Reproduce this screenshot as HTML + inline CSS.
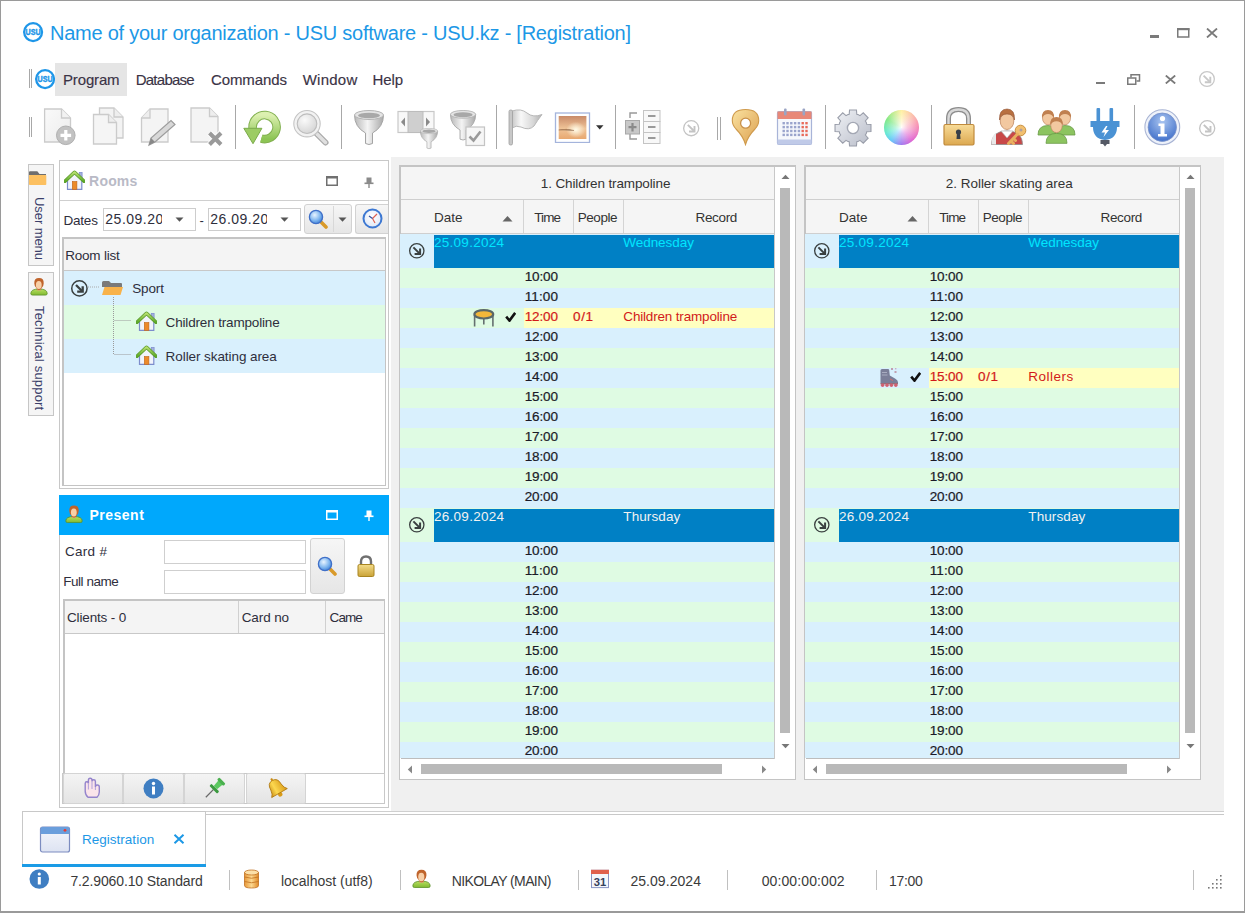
<!DOCTYPE html>
<html><head><meta charset="utf-8"><style>
html,body{margin:0;padding:0;}
body{width:1245px;height:913px;position:relative;overflow:hidden;background:#fff;font-family:"Liberation Sans",sans-serif;}
.a{position:absolute;}
.t{position:absolute;line-height:1;white-space:nowrap;}
</style></head><body>
<div class="a" style="left:0px;top:0px;width:1245px;height:913px;background:#fff;"></div>
<svg class="a" style="left:21.4px;top:19.9px" width="24.2" height="24.2" viewBox="0 0 24.2 24.2"><circle cx="12.1" cy="12.1" r="8.95" fill="#fff" stroke="#1e96e8" stroke-width="2.3"/><text x="12.1" y="15.1" font-family="Liberation Sans" font-weight="700" font-size="9" fill="#1e96e8" stroke="#1e96e8" stroke-width="0.45" text-anchor="middle" textLength="15" lengthAdjust="spacingAndGlyphs">USU</text></svg>
<div class="t" style="top:23.07px;font-size:20px;color:#1c98e6;letter-spacing:-0.244px;left:50px;-webkit-text-stroke:0;">Name of your organization - USU software - USU.kz - [Registration]</div>
<div class="a" style="left:1150px;top:35px;width:9px;height:2.5px;background:#7a7a7a;"></div>
<svg class="a" style="left:1177px;top:28px" width="13" height="10" viewBox="0 0 13 10"><rect x="0.75" y="1" width="11" height="8" fill="none" stroke="#7a7a7a" stroke-width="1.5"/><rect x="0" y="0" width="12.5" height="2.2" fill="#7a7a7a"/></svg>
<svg class="a" style="left:1206px;top:28px" width="12" height="10" viewBox="0 0 12 10"><path d="M1 0.5L11 9.5M11 0.5L1 9.5" stroke="#7a7a7a" stroke-width="1.8"/></svg>
<div class="a" style="left:28.5px;top:69px;width:1px;height:19px;background:#a8a8a8;"></div>
<div class="a" style="left:31px;top:69px;width:1px;height:19px;background:#a8a8a8;"></div>
<svg class="a" style="left:32.9px;top:66.7px" width="24.2" height="24.2" viewBox="0 0 24.2 24.2"><circle cx="12.1" cy="12.1" r="8.95" fill="#fff" stroke="#1e96e8" stroke-width="2.3"/><text x="12.1" y="15.1" font-family="Liberation Sans" font-weight="700" font-size="9" fill="#1e96e8" stroke="#1e96e8" stroke-width="0.45" text-anchor="middle" textLength="15" lengthAdjust="spacingAndGlyphs">USU</text></svg>
<div class="a" style="left:55px;top:63px;width:72px;height:33px;background:#e5e5e5;"></div>
<div class="t" style="top:72.30px;font-size:15px;color:#3a3345;letter-spacing:-0.153px;left:63px;-webkit-text-stroke:0.15px currentColor;">Program</div>
<div class="t" style="top:72.30px;font-size:15px;color:#3a3345;letter-spacing:-0.745px;left:135.7px;-webkit-text-stroke:0.15px currentColor;">Database</div>
<div class="t" style="top:72.30px;font-size:15px;color:#3a3345;letter-spacing:-0.099px;left:211px;-webkit-text-stroke:0.15px currentColor;">Commands</div>
<div class="t" style="top:72.30px;font-size:15px;color:#3a3345;letter-spacing:0.250px;left:302.7px;-webkit-text-stroke:0.15px currentColor;">Window</div>
<div class="t" style="top:72.30px;font-size:15px;color:#3a3345;letter-spacing:-0.117px;left:372.5px;-webkit-text-stroke:0.15px currentColor;">Help</div>
<div class="a" style="left:1096px;top:81.5px;width:9px;height:2.5px;background:#7a7a7a;"></div>
<svg class="a" style="left:1127px;top:74px" width="14" height="11" viewBox="0 0 14 11"><rect x="0.75" y="4" width="8" height="6.25" fill="#fff" stroke="#7a7a7a" stroke-width="1.5"/><path d="M4 3.5V0.75H12.5V7H9.5" fill="none" stroke="#7a7a7a" stroke-width="1.5"/></svg>
<svg class="a" style="left:1165px;top:75px" width="11" height="9" viewBox="0 0 11 9"><path d="M0.8 0.5L10.2 8.5M10.2 0.5L0.8 8.5" stroke="#7a7a7a" stroke-width="1.8"/></svg>
<svg class="a" style="left:1198px;top:70px" width="18" height="18" viewBox="0 0 18 18"><circle cx="9" cy="9" r="7.35" fill="none" stroke="#c8c8c8" stroke-width="1.3"/><path d="M5.6 5.6L11.6 11.6" stroke="#c8c8c8" stroke-width="1.9"/><path d="M12.3 6.8V12.3H6.8" fill="none" stroke="#c8c8c8" stroke-width="1.9"/></svg>
<div class="a" style="left:28.5px;top:117px;width:1px;height:20px;background:#a8a8a8;"></div>
<div class="a" style="left:31px;top:117px;width:1px;height:20px;background:#a8a8a8;"></div>
<svg class="a" style="left:42px;top:106px" width="36" height="40" viewBox="0 0 36 40"><defs><linearGradient id="pg" x1="0" y1="0" x2="1" y2="1"><stop offset="0" stop-color="#fafafa"/><stop offset="1" stop-color="#ececec"/></linearGradient></defs><path d="M2.6 3H19.5L28.5 12V36H2.6Z" fill="url(#pg)" stroke="#cbcbcb" stroke-width="1.3"/><path d="M19.5 3V12H28.5" fill="#f2f2f2" stroke="#cbcbcb" stroke-width="1.3"/><circle cx="23.8" cy="29.3" r="9.3" fill="#c2c2c2" stroke="#b0b0b0" stroke-width="1"/><path d="M23.8 24V34.6M18.5 29.3H29.1" stroke="#fff" stroke-width="3.2"/></svg>
<svg class="a" style="left:91px;top:106px" width="36" height="40" viewBox="0 0 36 40"><path d="M8.5 2H23L32 11V32H8.5Z" fill="#f3f3f3" stroke="#cbcbcb" stroke-width="1.3"/><path d="M23 2V11H32" fill="#eee" stroke="#cbcbcb" stroke-width="1.3"/><path d="M2.5 8.5H17.5L25.5 16.5V38H2.5Z" fill="#f5f5f5" stroke="#cbcbcb" stroke-width="1.3"/><path d="M17.5 8.5V16.5H25.5" fill="#eee" stroke="#cbcbcb" stroke-width="1.3"/></svg>
<svg class="a" style="left:140px;top:106px" width="38" height="42" viewBox="0 0 38 42"><path d="M10 3H28V36H1.5V12Z" fill="#f4f4f4" stroke="#cbcbcb" stroke-width="1.3"/><path d="M10 3V12H1.5" fill="#eee" stroke="#cbcbcb" stroke-width="1.3"/><path d="M9 39L11 32L31 14.5L35 18.5L15 36Z" fill="#d8d8d8" stroke="#9c9c9c" stroke-width="1.2"/><path d="M9 39L11 32L15 36Z" fill="#888"/></svg>
<svg class="a" style="left:189px;top:106px" width="36" height="40" viewBox="0 0 36 40"><path d="M2 2H20.5L29 10.5V36H2Z" fill="#f4f4f4" stroke="#cbcbcb" stroke-width="1.3"/><path d="M20.5 2V10.5H29" fill="#eee" stroke="#cbcbcb" stroke-width="1.3"/><path d="M20.5 27L32 38.5M32 27L20.5 38.5" stroke="#fff" stroke-width="6"/><path d="M20.5 27L32 38.5M32 27L20.5 38.5" stroke="#9a9a9a" stroke-width="4"/></svg>
<div class="a" style="left:234.5px;top:105px;width:1px;height:44px;background:#a8a8a8;"></div>
<svg class="a" style="left:242px;top:109px" width="40" height="37" viewBox="0 0 40 37"><defs><linearGradient id="rg" x1="0" y1="0" x2="0" y2="1"><stop offset="0" stop-color="#dcf0b0"/><stop offset="1" stop-color="#8cc454"/></linearGradient></defs><path d="M10.6 19.5V18.1A12 12 0 1 1 19.3 29.6" fill="none" stroke="#82b050" stroke-width="8.6"/><path d="M10.6 19.5V18.1A12 12 0 1 1 19.3 29.6" fill="none" stroke="url(#rg)" stroke-width="6.6"/><path d="M1.8 19.3H19.9L11 34.7Z" fill="#9ccc64" stroke="#7aaa4a" stroke-width="1"/></svg>
<svg class="a" style="left:291px;top:108px" width="40" height="40" viewBox="0 0 40 40"><defs><radialGradient id="mgg" cx="0.4" cy="0.35" r="0.7"><stop offset="0" stop-color="#fafafa"/><stop offset="1" stop-color="#cfcfcf"/></radialGradient></defs><path d="M26 26L34.5 34.5" stroke="#a8a8a8" stroke-width="6" stroke-linecap="round"/><path d="M26 26L34.5 34.5" stroke="#e0e0e0" stroke-width="3.5" stroke-linecap="round"/><circle cx="16" cy="15.7" r="11.5" fill="url(#mgg)" stroke="#f2f2f2" stroke-width="3"/><circle cx="16" cy="15.7" r="13.2" fill="none" stroke="#c4c4c4" stroke-width="1.1"/><circle cx="16" cy="15.7" r="9.8" fill="none" stroke="#bdbdbd" stroke-width="1.1"/></svg>
<div class="a" style="left:340.5px;top:105px;width:1px;height:44px;background:#a8a8a8;"></div>
<svg width="0" height="0" style="position:absolute"><defs><linearGradient id="fg" x1="0" y1="0" x2="1" y2="0"><stop offset="0" stop-color="#b8b8b8"/><stop offset="0.45" stop-color="#f4f4f4"/><stop offset="1" stop-color="#a8a8a8"/></linearGradient></defs></svg>
<svg class="a" style="left:353.5px;top:110px" width="32" height="37" viewBox="0 0 32 37"><g transform="scale(1.0)"><path d="M0.5 5Q0.5 17 11.5 23V33.5Q15 35.5 18.5 33.5V23Q29.5 17 29.5 5Z" fill="url(#fg)" stroke="#a4a4a4" stroke-width="1"/><ellipse cx="15" cy="5" rx="14.5" ry="4.5" fill="#e4e4e4" stroke="#b4b4b4" stroke-width="1"/><ellipse cx="15" cy="5.5" rx="11" ry="2.8" fill="#a8a8a8"/></g></svg>
<svg class="a" style="left:397px;top:110px" width="42" height="37" viewBox="0 0 42 37"><rect x="1" y="1.5" width="36" height="21" fill="#f8f8f8" stroke="#c8c8c8" stroke-width="1.2"/><rect x="11" y="1.5" width="15" height="21" fill="#cfcfcf" stroke="#bcbcbc" stroke-width="1"/><path d="M8 7.5V16.5L4 12Z" fill="#8a8a8a"/><path d="M29 7.5V16.5L33 12Z" fill="#8a8a8a"/></svg>
<svg class="a" style="left:420px;top:127.5px" width="19" height="22" viewBox="0 0 19 22"><g transform="scale(0.6)"><path d="M0.5 5Q0.5 17 11.5 23V33.5Q15 35.5 18.5 33.5V23Q29.5 17 29.5 5Z" fill="url(#fg)" stroke="#a4a4a4" stroke-width="1"/><ellipse cx="15" cy="5" rx="14.5" ry="4.5" fill="#e4e4e4" stroke="#b4b4b4" stroke-width="1"/><ellipse cx="15" cy="5.5" rx="11" ry="2.8" fill="#a8a8a8"/></g></svg>
<svg class="a" style="left:449.5px;top:110px" width="27" height="32" viewBox="0 0 27 32"><g transform="scale(0.87)"><path d="M0.5 5Q0.5 17 11.5 23V33.5Q15 35.5 18.5 33.5V23Q29.5 17 29.5 5Z" fill="url(#fg)" stroke="#a4a4a4" stroke-width="1"/><ellipse cx="15" cy="5" rx="14.5" ry="4.5" fill="#e4e4e4" stroke="#b4b4b4" stroke-width="1"/><ellipse cx="15" cy="5.5" rx="11" ry="2.8" fill="#a8a8a8"/></g></svg>
<svg class="a" style="left:464.5px;top:125.5px" width="21" height="21" viewBox="0 0 21 21"><rect x="1" y="1" width="18.5" height="18.5" fill="#f6f6f6" stroke="#c4c4c4" stroke-width="1.2"/><path d="M4.5 10.5L8.5 14.5L15.5 5.5" fill="none" stroke="#9a9a9a" stroke-width="2.6"/></svg>
<div class="a" style="left:495.5px;top:105px;width:1px;height:44px;background:#a8a8a8;"></div>
<svg class="a" style="left:507px;top:108px" width="37" height="39" viewBox="0 0 37 39"><defs><linearGradient id="flg" x1="0" y1="0" x2="1" y2="0"><stop offset="0" stop-color="#c8c8c8"/><stop offset="0.3" stop-color="#f8f8f8"/><stop offset="0.7" stop-color="#d8d8d8"/><stop offset="1" stop-color="#b0b0b0"/></linearGradient></defs><path d="M5 3Q14 0 20 5Q26 10 35 6.5Q30 13 27 18Q22 23 14 19Q9 17 5 20Z" fill="url(#flg)" stroke="#b8b8b8" stroke-width="1"/><rect x="2" y="2" width="3.5" height="35" rx="1.5" fill="#c8c8c8" stroke="#a0a0a0" stroke-width="0.8"/></svg>
<svg class="a" style="left:554px;top:112px" width="37" height="31" viewBox="0 0 37 31"><defs><linearGradient id="ig" x1="0" y1="0" x2="0" y2="1"><stop offset="0" stop-color="#c88a68"/><stop offset="0.55" stop-color="#f0c498"/><stop offset="1" stop-color="#e8a870"/></linearGradient><radialGradient id="sun" cx="0.62" cy="0.6" r="0.35"><stop offset="0" stop-color="#fffbe8"/><stop offset="1" stop-color="#fffbe8" stop-opacity="0"/></radialGradient></defs><rect x="1.5" y="1" width="34" height="29.5" fill="#fff" stroke="#a4b4dc" stroke-width="1.3"/><rect x="4.7" y="4" width="27.7" height="23" fill="url(#ig)"/><rect x="4.7" y="4" width="27.7" height="23" fill="url(#sun)"/><path d="M4.7 18Q12 16.5 20 18.5" stroke="#8a5a3a" stroke-width="1" opacity="0.6"/></svg>
<svg class="a" style="left:595.5px;top:124.5px" width="8" height="5" viewBox="0 0 8 5"><path d="M0 0.2H7.5L3.75 4.5Z" fill="#333"/></svg>
<div class="a" style="left:614.5px;top:105px;width:1px;height:44px;background:#a8a8a8;"></div>
<svg class="a" style="left:624px;top:109px" width="38" height="38" viewBox="0 0 38 38"><path d="M13 4H6V9M6 25V30H13" fill="none" stroke="#999" stroke-width="1.4"/><rect x="1.5" y="11.5" width="14" height="13.5" fill="#c8c8c8" stroke="#a8a8a8" stroke-width="1"/><path d="M8.5 14V22.5M4.5 18.2H12.5" stroke="#8a8a8a" stroke-width="2.2"/><rect x="19.5" y="1.5" width="16.5" height="11" fill="#f8f8f8" stroke="#c4c4c4" stroke-width="1"/><rect x="19.5" y="12.5" width="16.5" height="11" fill="#f8f8f8" stroke="#c4c4c4" stroke-width="1"/><rect x="19.5" y="23.5" width="16.5" height="11" fill="#f8f8f8" stroke="#c4c4c4" stroke-width="1"/><path d="M24 7H31.5M24 18H31.5M24 29H31.5" stroke="#9a9a9a" stroke-width="2"/></svg>
<svg class="a" style="left:682.3px;top:118.8px" width="18.4" height="18.4" viewBox="0 0 18.4 18.4"><circle cx="9.2" cy="9.2" r="7.549999999999999" fill="none" stroke="#c4c4c4" stroke-width="1.3"/><path d="M5.799999999999999 5.799999999999999L11.799999999999999 11.799999999999999" stroke="#c4c4c4" stroke-width="1.9"/><path d="M12.5 6.999999999999999V12.5H6.999999999999999" fill="none" stroke="#c4c4c4" stroke-width="1.9"/></svg>
<div class="a" style="left:717px;top:117px;width:1px;height:23px;background:#a8a8a8;"></div>
<div class="a" style="left:719.5px;top:117px;width:1px;height:23px;background:#a8a8a8;"></div>
<svg class="a" style="left:731px;top:108px" width="30" height="38" viewBox="0 0 30 38"><defs><linearGradient id="mpg" x1="0" y1="0" x2="1" y2="1"><stop offset="0" stop-color="#fae2a0"/><stop offset="1" stop-color="#dca050"/></linearGradient></defs><path d="M14.5 36.5Q12 28 5 21Q1.3 17 1.3 12.5Q1.3 1.5 14.5 1.5Q27.7 1.5 27.7 12.5Q27.7 17 24 21Q17 28 14.5 36.5Z" fill="url(#mpg)" stroke="#cf9a4c" stroke-width="1.1"/><circle cx="14.6" cy="15.2" r="5" fill="#fff" stroke="#c89048" stroke-width="1.3"/></svg>
<svg class="a" style="left:776px;top:108px" width="37" height="38" viewBox="0 0 37 38"><rect x="1.5" y="3.5" width="34" height="33" rx="1.5" fill="#f6f8fc" stroke="#a8b4d8" stroke-width="1.2"/><rect x="1.5" y="3.5" width="34" height="7.5" fill="#e88878"/><rect x="1.5" y="31.5" width="34" height="5" fill="#c0cae8"/><rect x="8" y="0.5" width="2.6" height="7" rx="1" fill="#9aa4c4"/><rect x="26.5" y="0.5" width="2.6" height="7" rx="1" fill="#9aa4c4"/><rect x="6.5" y="14.0" width="2.4" height="2.4" fill="#9aa4cc"/><rect x="10.3" y="14.0" width="2.4" height="2.4" fill="#9aa4cc"/><rect x="14.1" y="14.0" width="2.4" height="2.4" fill="#9aa4cc"/><rect x="17.9" y="14.0" width="2.4" height="2.4" fill="#9aa4cc"/><rect x="21.7" y="14.0" width="2.4" height="2.4" fill="#9aa4cc"/><rect x="25.5" y="14.0" width="2.4" height="2.4" fill="#e86a5a"/><rect x="29.3" y="14.0" width="2.4" height="2.4" fill="#e86a5a"/><rect x="6.5" y="17.9" width="2.4" height="2.4" fill="#9aa4cc"/><rect x="10.3" y="17.9" width="2.4" height="2.4" fill="#9aa4cc"/><rect x="14.1" y="17.9" width="2.4" height="2.4" fill="#9aa4cc"/><rect x="17.9" y="17.9" width="2.4" height="2.4" fill="#9aa4cc"/><rect x="21.7" y="17.9" width="2.4" height="2.4" fill="#9aa4cc"/><rect x="25.5" y="17.9" width="2.4" height="2.4" fill="#e86a5a"/><rect x="29.3" y="17.9" width="2.4" height="2.4" fill="#e86a5a"/><rect x="6.5" y="21.8" width="2.4" height="2.4" fill="#9aa4cc"/><rect x="10.3" y="21.8" width="2.4" height="2.4" fill="#9aa4cc"/><rect x="14.1" y="21.8" width="2.4" height="2.4" fill="#9aa4cc"/><rect x="17.9" y="21.8" width="2.4" height="2.4" fill="#9aa4cc"/><rect x="21.7" y="21.8" width="2.4" height="2.4" fill="#9aa4cc"/><rect x="25.5" y="21.8" width="2.4" height="2.4" fill="#e86a5a"/><rect x="29.3" y="21.8" width="2.4" height="2.4" fill="#e86a5a"/><rect x="6.5" y="25.7" width="2.4" height="2.4" fill="#9aa4cc"/><rect x="10.3" y="25.7" width="2.4" height="2.4" fill="#9aa4cc"/><rect x="14.1" y="25.7" width="2.4" height="2.4" fill="#9aa4cc"/><rect x="17.9" y="25.7" width="2.4" height="2.4" fill="#9aa4cc"/><rect x="21.7" y="25.7" width="2.4" height="2.4" fill="#9aa4cc"/><rect x="25.5" y="25.7" width="2.4" height="2.4" fill="#e86a5a"/><rect x="29.3" y="25.7" width="2.4" height="2.4" fill="#e86a5a"/></svg>
<div class="a" style="left:824.5px;top:105px;width:1px;height:44px;background:#a8a8a8;"></div>
<svg class="a" style="left:833.5px;top:108.5px" width="38" height="38" viewBox="0 0 38 38"><defs><linearGradient id="gg" x1="0" y1="0" x2="1" y2="1"><stop offset="0" stop-color="#f0f2f6"/><stop offset="1" stop-color="#b8bcc8"/></linearGradient></defs><polygon points="32.69,15.21 36.97,15.54 36.97,22.46 32.69,22.79 32.30,24.51 31.36,26.00 34.15,29.26 29.26,34.15 26.00,31.36 24.51,32.30 22.79,32.69 22.46,36.97 15.54,36.97 15.21,32.69 13.49,32.30 12.00,31.36 8.74,34.15 3.85,29.26 6.64,26.00 5.70,24.51 5.31,22.79 1.03,22.46 1.03,15.54 5.31,15.21 5.70,13.49 6.64,12.00 3.85,8.74 8.74,3.85 12.00,6.64 13.49,5.70 15.21,5.31 15.54,1.03 22.46,1.03 22.79,5.31 24.51,5.70 26.00,6.64 29.26,3.85 34.15,8.74 31.36,12.00 32.30,13.49" fill="url(#gg)" stroke="#9a9eaa" stroke-width="1.1"/><circle cx="19" cy="19" r="5.6" fill="#fff" stroke="#a4a8b4" stroke-width="1.4"/></svg>
<div class="a" style="left:883.6px;top:109.6px;width:35.2px;height:35.2px;background:radial-gradient(circle closest-side, rgba(255,255,255,0.95) 0%, rgba(255,255,255,0.55) 35%, rgba(255,255,255,0) 100%), conic-gradient(from 0deg, #fff0a0, #f890b0 80deg, #e060d0 140deg, #a078f0 180deg, #60c8f8 220deg, #60e8d0 250deg, #80e880 300deg, #fff0a0 360deg);border-radius:50%;"></div>
<div class="a" style="left:930.5px;top:105px;width:1px;height:44px;background:#a8a8a8;"></div>
<svg class="a" style="left:942px;top:107px" width="34" height="40" viewBox="0 0 34 40"><defs><linearGradient id="lkg" x1="0" y1="0" x2="0" y2="1"><stop offset="0" stop-color="#f8dc98"/><stop offset="1" stop-color="#dca850"/></linearGradient></defs><path d="M6.5 18V11.5Q6.5 2.5 16.5 2.5Q26.5 2.5 26.5 11.5V18" fill="none" stroke="#8c8c8c" stroke-width="5"/><path d="M6.5 18V11.5Q6.5 2.5 16.5 2.5Q26.5 2.5 26.5 11.5V18" fill="none" stroke="#d8d8d8" stroke-width="2.4"/><rect x="2" y="17.5" width="30" height="20.5" rx="1.5" fill="url(#lkg)" stroke="#c08a3c" stroke-width="1.2"/><circle cx="16.5" cy="25" r="2.6" fill="#3a4048"/><path d="M15 25.5H18L18.5 32H14.5Z" fill="#3a4048"/></svg>
<svg class="a" style="left:990px;top:107px" width="38" height="39" viewBox="0 0 38 39"><path d="M1.5 37.5Q1.5 24 17 24Q32.5 24 32.5 37.5Z" fill="#c84848" stroke="#8a8a8a" stroke-width="0.8"/><path d="M11 24L17 31L23 24Z" fill="#fff" stroke="#aaa" stroke-width="0.6"/><path d="M1.5 37.5Q1.5 28 6 26V37.5Z" fill="#e8e8e8"/><ellipse cx="17" cy="14" rx="6.8" ry="8.5" fill="#f2c8a0" stroke="#c08860" stroke-width="0.8"/><path d="M9.5 13Q9 2 17 2Q25 2 24.5 13Q23.5 7 17 7Q10.5 7 9.5 13Z" fill="#b87040" stroke="#905030" stroke-width="0.6"/><circle cx="30.5" cy="23.5" r="5.3" fill="#f2c070" stroke="#c89040" stroke-width="1"/><circle cx="31" cy="23" r="1.5" fill="#b0a0a0"/><path d="M27.5 27L18.5 36.5M21 34L23.5 36.5M23.5 31.5L25.5 33.5" stroke="#e8b060" stroke-width="3" stroke-linecap="round"/></svg>
<svg class="a" style="left:1036px;top:108px" width="42" height="38" viewBox="0 0 42 38"><path d="M2.0 27.0Q2.0 17.5 12 17.5Q22.0 17.5 22.0 27.0Z" fill="#8cc460" stroke="#6a9a48" stroke-width="0.8"/><ellipse cx="12" cy="10" rx="5.5" ry="6.8" fill="#f2c8a0" stroke="#c08860" stroke-width="0.7"/><path d="M6.0 10Q5.5 2.0 12 2.0Q18.5 2.0 18.0 10Q16.0 6.0 12 6.0Q8.0 6.0 6.0 10Z" fill="#c08050"/><path d="M19.0 27.0Q19.0 17.5 29 17.5Q39.0 17.5 39.0 27.0Z" fill="#8cc460" stroke="#6a9a48" stroke-width="0.8"/><ellipse cx="29" cy="10" rx="5.5" ry="6.8" fill="#f2c8a0" stroke="#c08860" stroke-width="0.7"/><path d="M23.0 10Q22.5 2.0 29 2.0Q35.5 2.0 35.0 10Q33.0 6.0 29 6.0Q25.0 6.0 23.0 10Z" fill="#c08050"/><path d="M10.0 35.35Q10.0 25.375 20.5 25.375Q31.0 25.375 31.0 35.35Z" fill="#8cc460" stroke="#6a9a48" stroke-width="0.8"/><ellipse cx="20.5" cy="17.5" rx="5.775" ry="7.14" fill="#f2c8a0" stroke="#c08860" stroke-width="0.7"/><path d="M14.2 17.5Q13.675 9.1 20.5 9.1Q27.325 9.1 26.8 17.5Q24.7 13.3 20.5 13.3Q16.3 13.3 14.2 17.5Z" fill="#c08050"/></svg>
<svg class="a" style="left:1089px;top:107px" width="32" height="41" viewBox="0 0 32 41"><rect x="7.5" y="1" width="3.6" height="14" rx="1" fill="#4a92d4"/><rect x="20.5" y="1" width="3.6" height="14" rx="1" fill="#4a92d4"/><path d="M1.5 14H30.5V20H28Q28 32 16 33Q4 32 4 20H1.5Z" fill="#4a92d4"/><path d="M17 19L12.5 25.5H16L14.5 30L20 23H16.5L18.5 19Z" fill="#fff"/><path d="M11.5 33H20.5V37H18L16 39.5L14 37H11.5Z" fill="#555a66"/></svg>
<div class="a" style="left:1134px;top:105px;width:1px;height:44px;background:#a8a8a8;"></div>
<svg class="a" style="left:1143px;top:108px" width="39" height="39" viewBox="0 0 39 39"><defs><radialGradient id="ifg" cx="0.5" cy="0.3" r="0.75"><stop offset="0" stop-color="#a8c4f0"/><stop offset="1" stop-color="#3c6cc8"/></radialGradient></defs><circle cx="19.3" cy="19.2" r="17.4" fill="#eef2fa" stroke="#a8b4d4" stroke-width="1.1"/><circle cx="19.3" cy="19.2" r="14.2" fill="url(#ifg)" stroke="#7890c8" stroke-width="0.8"/><circle cx="19.5" cy="10.5" r="2.6" fill="#fff"/><path d="M15.5 15.5H21.5V26H24V28.5H15V26H17.5V18H15.5Z" fill="#fff"/></svg>
<svg class="a" style="left:1197.8px;top:118.8px" width="18.4" height="18.4" viewBox="0 0 18.4 18.4"><circle cx="9.2" cy="9.2" r="7.549999999999999" fill="none" stroke="#c4c4c4" stroke-width="1.3"/><path d="M5.799999999999999 5.799999999999999L11.799999999999999 11.799999999999999" stroke="#c4c4c4" stroke-width="1.9"/><path d="M12.5 6.999999999999999V12.5H6.999999999999999" fill="none" stroke="#c4c4c4" stroke-width="1.9"/></svg>
<div class="a" style="left:391px;top:157px;width:833px;height:654px;background:#f0f0f0;"></div>
<div class="a" style="left:28px;top:164px;width:26px;height:102px;background:#f5f5f5;border:1px solid #c6c6c6;box-sizing:border-box;"></div>
<svg class="a" style="left:28.8px;top:171px" width="18" height="14" viewBox="0 0 18 14"><path d="M0 4V1.2Q0 0.3 1 0.3H8.3L10.5 3H17V4.2H0Z" fill="#6e6e6e"/><rect x="0" y="4" width="17.3" height="10" rx="0.8" fill="#fcc060"/></svg>
<div class="t" style="top:186.00px;font-size:13px;color:#3b3f6a;letter-spacing:-0.072px;left:33px;transform-origin:0 0;transform:rotate(90deg);left:46px;top:197px;">User menu</div>
<div class="a" style="left:28px;top:272px;width:26px;height:144px;background:#f5f5f5;border:1px solid #c6c6c6;box-sizing:border-box;"></div>
<svg class="a" style="left:30px;top:277px" width="18" height="19" viewBox="0 0 18 18"><defs><linearGradient id="pbg" x1="0" y1="0" x2="0" y2="1"><stop offset="0" stop-color="#b8e060"/><stop offset="1" stop-color="#80b830"/></linearGradient></defs><path d="M0.8 16Q0.8 11.5 9 11.5Q17.2 11.5 17.2 16Q17.2 17.6 15.5 17.6H2.5Q0.8 17.6 0.8 16Z" fill="url(#pbg)" stroke="#5a9028" stroke-width="0.8"/><path d="M7 10.5H11V13H7Z" fill="#d89a70"/><path d="M4.3 6Q4 0.6 9 0.6Q14 0.6 13.7 6Q13.5 9 12 10Q11 12.5 9 12.5Q7 12.5 6 10Q4.5 9 4.3 6Z" fill="#c0642c"/><ellipse cx="8.8" cy="7.6" rx="2.9" ry="4" fill="#f8d0a8"/></svg>
<div class="t" style="top:295.00px;font-size:13px;color:#3b3f6a;letter-spacing:0.189px;left:33px;transform-origin:0 0;transform:rotate(90deg);left:46px;top:306px;">Technical support</div>
<div class="a" style="left:59px;top:160px;width:330px;height:329px;background:#fff;border:1px solid #c8c8c8;box-sizing:border-box;"></div>
<div class="a" style="left:60px;top:200px;width:328px;height:1px;background:#cfcfcf;"></div>
<svg class="a" style="left:63.5px;top:169.5px" width="21" height="20" viewBox="0 0 21 20"><defs><linearGradient id="hrg" x1="0" y1="0" x2="0" y2="1"><stop offset="0" stop-color="#b8e070"/><stop offset="1" stop-color="#5aa828"/></linearGradient></defs><rect x="15.3" y="2.5" width="2.8" height="6" fill="#a4b0dc" stroke="#8090d0" stroke-width="0.8"/><path d="M3.5 9.5L10.5 3L17.8 9.5V19.3H3.5Z" fill="#f2f4fb" stroke="#7c8ccc" stroke-width="1.2"/><rect x="8.3" y="11.5" width="4.6" height="8" fill="#ec8a2a" stroke="#c0641a" stroke-width="0.6"/><path d="M1 11.2L10.5 2.3L20 11.2" fill="none" stroke="#5a9a2a" stroke-width="3.6" stroke-linejoin="round" stroke-linecap="round"/><path d="M1 11.2L10.5 2.3L20 11.2" fill="none" stroke="url(#hrg)" stroke-width="2.2" stroke-linejoin="round" stroke-linecap="round"/></svg>
<div class="t" style="top:174.45px;font-size:14px;color:#b9bac6;letter-spacing:0.188px;font-weight:700;left:89.1px;">Rooms</div>
<svg class="a" style="left:326px;top:176px" width="12" height="10" viewBox="0 0 12 10"><rect x="0.75" y="0.75" width="10.5" height="8.5" fill="none" stroke="#707070" stroke-width="1.5"/><rect x="0" y="0" width="12" height="2.5" fill="#707070"/></svg>
<svg class="a" style="left:364px;top:177px" width="10" height="11" viewBox="0 0 10 11"><rect x="2.5" y="0.5" width="5" height="6" fill="#8a8a8a"/><rect x="0.5" y="5.5" width="9" height="1.6" fill="#8a8a8a"/><rect x="4.3" y="6" width="1.4" height="5" fill="#8a8a8a"/></svg>
<div class="t" style="top:213.57px;font-size:13.5px;color:#2e2e3c;letter-spacing:-0.192px;left:63.4px;">Dates</div>
<div class="a" style="left:103px;top:208px;width:93px;height:23px;background:#fff;border:1px solid #cdcdcd;box-sizing:border-box;"></div>
<div class="a" style="left:105px;top:210px;width:56.5px;height:19px;overflow:hidden">
<div class="t" style="top:2.15px;font-size:14px;color:#2e2e3c;letter-spacing:0.503px;left:0.3px;">25.09.2024</div>
</div>
<svg class="a" style="left:175px;top:217px" width="9" height="5" viewBox="0 0 9 5"><path d="M0.5 0.5H8.5L4.5 4.8Z" fill="#555"/></svg>
<div class="a" style="left:208px;top:208px;width:93px;height:23px;background:#fff;border:1px solid #cdcdcd;box-sizing:border-box;"></div>
<div class="a" style="left:210px;top:210px;width:56.5px;height:19px;overflow:hidden">
<div class="t" style="top:2.15px;font-size:14px;color:#2e2e3c;letter-spacing:0.503px;left:0.3px;">26.09.2024</div>
</div>
<svg class="a" style="left:280px;top:217px" width="9" height="5" viewBox="0 0 9 5"><path d="M0.5 0.5H8.5L4.5 4.8Z" fill="#555"/></svg>
<div class="t" style="top:214.00px;font-size:13px;color:#2e2e3c;left:199.5px;">-</div>
<div class="a" style="left:304px;top:204px;width:48px;height:30px;background:linear-gradient(#f6f6f6,#e6e6e6);border:1px solid #d2d2d2;box-sizing:border-box;border-radius:3px;"></div>
<div class="a" style="left:333px;top:206px;width:1px;height:26px;background:#d8d8d8;"></div>
<svg class="a" style="left:307.5px;top:209px" width="20" height="20" viewBox="0 0 20 20"><defs><radialGradient id="mg" cx="0.4" cy="0.35" r="0.7"><stop offset="0" stop-color="#e8f4ff"/><stop offset="0.6" stop-color="#7fb6ef"/><stop offset="1" stop-color="#3d7fd6"/></radialGradient></defs><path d="M12 12L18 18" stroke="#d99a2a" stroke-width="3.6" stroke-linecap="round"/><circle cx="8" cy="8" r="6.6" fill="url(#mg)" stroke="#3f6fc8" stroke-width="1.3"/></svg>
<svg class="a" style="left:337.5px;top:217px" width="9" height="5" viewBox="0 0 9 5"><path d="M0.5 0.5H8.5L4.5 4.8Z" fill="#555"/></svg>
<div class="a" style="left:355px;top:204px;width:33px;height:30px;background:linear-gradient(#f6f6f6,#e6e6e6);border:1px solid #d2d2d2;box-sizing:border-box;border-right:none;border-radius:3px 0 0 3px;"></div>
<svg class="a" style="left:362px;top:208px" width="21" height="21" viewBox="0 0 21 21"><defs><radialGradient id="cg" cx="0.5" cy="0.4" r="0.6"><stop offset="0" stop-color="#fff"/><stop offset="1" stop-color="#dfe8f6"/></radialGradient></defs><circle cx="10.5" cy="10.5" r="9" fill="url(#cg)" stroke="#3d78d2" stroke-width="2"/><path d="M10.5 10.5L15 6M10.5 10.5L13 15" stroke="#e06050" stroke-width="1.2"/><path d="M10.5 10.5L7 8" stroke="#3050a0" stroke-width="1.2"/></svg>
<div class="a" style="left:388px;top:160px;width:1px;height:329px;background:#c8c8c8;"></div>
<div class="a" style="left:62px;top:237px;width:324px;height:249px;background:#fff;border:1px solid #c4c4c4;box-sizing:border-box;border-width:2px 1px 1px 2px;"></div>
<div class="a" style="left:64px;top:239px;width:321px;height:31px;background:#f4f4f4;"></div>
<div class="a" style="left:64px;top:270px;width:321px;height:1px;background:#c8c8c8;"></div>
<div class="t" style="top:248.57px;font-size:13.5px;color:#2e2e3c;letter-spacing:-0.233px;left:65.3px;">Room list</div>
<div class="a" style="left:64px;top:271px;width:321px;height:34px;background:#d9f0fd;"></div>
<div class="a" style="left:64px;top:305px;width:321px;height:34px;background:#dffbe3;"></div>
<div class="a" style="left:64px;top:339px;width:321px;height:33.5px;background:#d9f0fd;"></div>
<svg class="a" style="left:69.89999999999999px;top:278.8px" width="18.8" height="18.8" viewBox="0 0 18.8 18.8"><circle cx="9.4" cy="9.4" r="7.65" fill="none" stroke="#3a4040" stroke-width="1.5"/><path d="M6.0 6.0L12.0 12.0" stroke="#3a4040" stroke-width="2.3"/><path d="M12.7 7.2V12.7H7.2" fill="none" stroke="#3a4040" stroke-width="2.3"/></svg>
<svg class="a" style="left:88px;top:286px" width="12" height="2" viewBox="0 0 12 2"><path d="M0 1H12" stroke="#aaa" stroke-width="1" stroke-dasharray="1 1"/></svg>
<svg class="a" style="left:102px;top:281px" width="21" height="14" viewBox="0 0 21 14"><path d="M0 1.5Q0 0 1.5 0H7L9 2H19Q20 2 20 3V6H0Z" fill="#7a7a7a"/><path d="M0 14L2.5 6H21L18.5 14Z" fill="#f8b24a"/></svg>
<div class="t" style="top:282.17px;font-size:13.5px;color:#2e2e3c;letter-spacing:-0.117px;left:132.2px;">Sport</div>
<svg class="a" style="left:112px;top:297px" width="20" height="60" viewBox="0 0 20 60"><path d="M1.5 0V57.5M2.5 57.5H19M2.5 23.5H19" fill="none" stroke="#9a9a9a" stroke-width="1" stroke-dasharray="1 1"/></svg>
<svg class="a" style="left:136px;top:310.5px" width="21" height="20" viewBox="0 0 21 20"><defs><linearGradient id="hrg" x1="0" y1="0" x2="0" y2="1"><stop offset="0" stop-color="#b8e070"/><stop offset="1" stop-color="#5aa828"/></linearGradient></defs><rect x="15.3" y="2.5" width="2.8" height="6" fill="#a4b0dc" stroke="#8090d0" stroke-width="0.8"/><path d="M3.5 9.5L10.5 3L17.8 9.5V19.3H3.5Z" fill="#f2f4fb" stroke="#7c8ccc" stroke-width="1.2"/><rect x="8.3" y="11.5" width="4.6" height="8" fill="#ec8a2a" stroke="#c0641a" stroke-width="0.6"/><path d="M1 11.2L10.5 2.3L20 11.2" fill="none" stroke="#5a9a2a" stroke-width="3.6" stroke-linejoin="round" stroke-linecap="round"/><path d="M1 11.2L10.5 2.3L20 11.2" fill="none" stroke="url(#hrg)" stroke-width="2.2" stroke-linejoin="round" stroke-linecap="round"/></svg>
<div class="t" style="top:315.87px;font-size:13.5px;color:#2e2e3c;letter-spacing:-0.164px;left:165.6px;">Children trampoline</div>
<svg class="a" style="left:136px;top:344.5px" width="21" height="20" viewBox="0 0 21 20"><defs><linearGradient id="hrg" x1="0" y1="0" x2="0" y2="1"><stop offset="0" stop-color="#b8e070"/><stop offset="1" stop-color="#5aa828"/></linearGradient></defs><rect x="15.3" y="2.5" width="2.8" height="6" fill="#a4b0dc" stroke="#8090d0" stroke-width="0.8"/><path d="M3.5 9.5L10.5 3L17.8 9.5V19.3H3.5Z" fill="#f2f4fb" stroke="#7c8ccc" stroke-width="1.2"/><rect x="8.3" y="11.5" width="4.6" height="8" fill="#ec8a2a" stroke="#c0641a" stroke-width="0.6"/><path d="M1 11.2L10.5 2.3L20 11.2" fill="none" stroke="#5a9a2a" stroke-width="3.6" stroke-linejoin="round" stroke-linecap="round"/><path d="M1 11.2L10.5 2.3L20 11.2" fill="none" stroke="url(#hrg)" stroke-width="2.2" stroke-linejoin="round" stroke-linecap="round"/></svg>
<div class="t" style="top:349.57px;font-size:13.5px;color:#2e2e3c;letter-spacing:-0.075px;left:165.6px;">Roller skating area</div>
<div class="a" style="left:59px;top:495px;width:330px;height:313px;background:#fff;border:1px solid #c8c8c8;box-sizing:border-box;"></div>
<div class="a" style="left:59px;top:495px;width:330px;height:40px;background:#00a8fc;"></div>
<svg class="a" style="left:64.5px;top:505px" width="18" height="18" viewBox="0 0 18 18"><defs><linearGradient id="pbg" x1="0" y1="0" x2="0" y2="1"><stop offset="0" stop-color="#b8e060"/><stop offset="1" stop-color="#80b830"/></linearGradient></defs><path d="M0.8 16Q0.8 11.5 9 11.5Q17.2 11.5 17.2 16Q17.2 17.6 15.5 17.6H2.5Q0.8 17.6 0.8 16Z" fill="url(#pbg)" stroke="#5a9028" stroke-width="0.8"/><path d="M7 10.5H11V13H7Z" fill="#d89a70"/><path d="M4.3 6Q4 0.6 9 0.6Q14 0.6 13.7 6Q13.5 9 12 10Q11 12.5 9 12.5Q7 12.5 6 10Q4.5 9 4.3 6Z" fill="#c0642c"/><ellipse cx="8.8" cy="7.6" rx="2.9" ry="4" fill="#f8d0a8"/></svg>
<div class="t" style="top:508.15px;font-size:14px;color:#fff;letter-spacing:0.507px;font-weight:700;left:89.4px;">Present</div>
<svg class="a" style="left:326px;top:510px" width="12" height="10" viewBox="0 0 12 10"><rect x="0.75" y="0.75" width="10.5" height="8.5" fill="none" stroke="#fff" stroke-width="1.5"/><rect x="0" y="0" width="12" height="2.5" fill="#fff"/></svg>
<svg class="a" style="left:364px;top:509.5px" width="10" height="11" viewBox="0 0 10 11"><rect x="2.5" y="0.5" width="5" height="6" fill="#fff"/><rect x="0.5" y="5.5" width="9" height="1.6" fill="#fff"/><rect x="4.3" y="6" width="1.4" height="5" fill="#fff"/></svg>
<div class="t" style="top:544.77px;font-size:13.5px;color:#2e2e3c;letter-spacing:0.296px;left:64.9px;">Card #</div>
<div class="t" style="top:574.57px;font-size:13.5px;color:#2e2e3c;letter-spacing:-0.484px;left:63.3px;">Full name</div>
<div class="a" style="left:164px;top:540px;width:142px;height:24px;background:#fff;border:1px solid #cfcfcf;box-sizing:border-box;"></div>
<div class="a" style="left:164px;top:570px;width:142px;height:24px;background:#fff;border:1px solid #cfcfcf;box-sizing:border-box;"></div>
<div class="a" style="left:310px;top:538px;width:35px;height:56px;background:linear-gradient(#f6f6f6,#e6e6e6);border:1px solid #d2d2d2;box-sizing:border-box;border-radius:3px;"></div>
<svg class="a" style="left:317px;top:556px" width="20" height="20" viewBox="0 0 20 20"><defs><radialGradient id="mg" cx="0.4" cy="0.35" r="0.7"><stop offset="0" stop-color="#e8f4ff"/><stop offset="0.6" stop-color="#7fb6ef"/><stop offset="1" stop-color="#3d7fd6"/></radialGradient></defs><path d="M12 12L18 18" stroke="#d99a2a" stroke-width="3.6" stroke-linecap="round"/><circle cx="8" cy="8" r="6.6" fill="url(#mg)" stroke="#3f6fc8" stroke-width="1.3"/></svg>
<svg class="a" style="left:356px;top:555px" width="20" height="23" viewBox="0 0 20 23"><defs><linearGradient id="lg" x1="0" y1="0" x2="0" y2="1"><stop offset="0" stop-color="#f4dc8a"/><stop offset="1" stop-color="#c9a236"/></linearGradient></defs><path d="M5 10V6.5Q5 1.5 10 1.5Q15 1.5 15 6.5V10" fill="none" stroke="#707070" stroke-width="2.4"/><rect x="2" y="9.5" width="16" height="12" rx="1.5" fill="url(#lg)" stroke="#a88420" stroke-width="1"/></svg>
<div class="a" style="left:63px;top:599px;width:322px;height:175px;background:#fff;border:1px solid #c4c4c4;box-sizing:border-box;border-width:2px 1px 1px 2px;"></div>
<div class="a" style="left:65px;top:601px;width:319px;height:32px;background:#f4f4f4;"></div>
<div class="a" style="left:65px;top:633px;width:319px;height:1px;background:#c8c8c8;"></div>
<div class="a" style="left:238px;top:601px;width:1px;height:32px;background:#d0d0d0;"></div>
<div class="a" style="left:325px;top:601px;width:1px;height:32px;background:#d0d0d0;"></div>
<div class="t" style="top:610.87px;font-size:13.5px;color:#2e2e3c;letter-spacing:-0.157px;left:67px;">Clients - 0</div>
<div class="t" style="top:610.87px;font-size:13.5px;color:#2e2e3c;letter-spacing:-0.105px;left:241.7px;">Card no</div>
<div class="t" style="top:610.87px;font-size:13.5px;color:#2e2e3c;letter-spacing:-0.937px;left:329.6px;">Came</div>
<div class="a" style="left:62px;top:773px;width:323px;height:31px;background:#fff;border:1px solid #c8c8c8;box-sizing:border-box;"></div>
<div class="a" style="left:62.5px;top:773px;width:60.5px;height:30.5px;background:linear-gradient(#f4f4f4,#e4e4e4);border:1px solid #d4d4d4;box-sizing:border-box;border-radius:2px;"></div>
<div class="a" style="left:123px;top:773px;width:61.30000000000001px;height:30.5px;background:linear-gradient(#f4f4f4,#e4e4e4);border:1px solid #d4d4d4;box-sizing:border-box;border-radius:2px;"></div>
<div class="a" style="left:184.3px;top:773px;width:61.19999999999999px;height:30.5px;background:linear-gradient(#f4f4f4,#e4e4e4);border:1px solid #d4d4d4;box-sizing:border-box;border-radius:2px;"></div>
<div class="a" style="left:245.5px;top:773px;width:60.89999999999998px;height:30.5px;background:linear-gradient(#f4f4f4,#e4e4e4);border:1px solid #d4d4d4;box-sizing:border-box;border-radius:2px;"></div>
<svg class="a" style="left:84px;top:777px" width="17" height="21" viewBox="0 0 17 21"><path d="M1.2 14V6.5Q1.2 4.8 2.8 4.8Q4.4 4.8 4.4 6.5V3.2Q4.4 1.3 6.2 1.3Q8 1.3 8 3.2V4.5Q8 2.8 9.7 2.8Q11.4 2.8 11.4 4.5V10Q11.4 8 13.3 8Q15.3 8 15.3 10V15Q15.3 18 13 20.3H4Q1.2 18 1.2 14Z" fill="#fae4ea" stroke="#9484cc" stroke-width="1.4"/><path d="M4.4 6.5V12.5M8 4.5V12M11.4 10V13" stroke="#a898d8" stroke-width="0.9"/></svg>
<svg class="a" style="left:143px;top:778px" width="21" height="21" viewBox="0 0 21 21"><circle cx="10.5" cy="10.5" r="10" fill="#3f7ec2"/><rect x="9" y="8.5" width="3" height="8" fill="#fff"/><circle cx="10.5" cy="5.5" r="1.7" fill="#fff"/></svg>
<svg class="a" style="left:203px;top:777px" width="24" height="22" viewBox="0 0 24 22"><g transform="rotate(45 12 11)"><path d="M12 13V24" stroke="#6a6a6a" stroke-width="1.3"/><rect x="6.5" y="10.5" width="11" height="3" rx="1" fill="#3c9a40"/><path d="M9 3H15L14.3 10.5H9.7Z" fill="#5cc860"/><rect x="7.5" y="0.5" width="9" height="3.2" rx="1.2" fill="#4ab04e"/></g></svg>
<svg class="a" style="left:264px;top:776px" width="24" height="23" viewBox="0 0 24 23"><defs><linearGradient id="blg" x1="0" y1="0" x2="1" y2="0"><stop offset="0" stop-color="#c88a10"/><stop offset="0.4" stop-color="#fcd850"/><stop offset="1" stop-color="#d89a18"/></linearGradient></defs><g transform="rotate(-30 12 11)"><circle cx="12" cy="19.5" r="2.3" fill="#d89a18"/><path d="M3 18Q5.5 16 6 11Q6 3.5 12 3.5Q18 3.5 18 11Q18.5 16 21 18Z" fill="url(#blg)" stroke="#b07810" stroke-width="0.8"/><rect x="11" y="1.3" width="2" height="2.5" fill="#c88a10"/></g></svg>
<div class="a" style="left:399px;top:165px;width:397px;height:615px;background:#fff;border:2px solid #c4c4c4;box-sizing:border-box;border-right-width:1px;border-bottom-width:1px;"></div>
<div class="a" style="left:401px;top:167px;width:373px;height:66px;background:#f5f5f5;"></div>
<div class="a" style="left:401px;top:199px;width:373px;height:1px;background:#cfcfcf;"></div>
<div class="a" style="left:401px;top:233px;width:373px;height:1px;background:#cfcfcf;"></div>
<div class="t" style="top:177.27px;font-size:13.5px;color:#333;letter-spacing:-0.118px;left:540.8px;">1. Children trampoline</div>
<div class="a" style="left:523px;top:200px;width:1px;height:33px;background:#d4d4d4;"></div>
<div class="a" style="left:573px;top:200px;width:1px;height:33px;background:#d4d4d4;"></div>
<div class="a" style="left:623px;top:200px;width:1px;height:33px;background:#d4d4d4;"></div>
<div class="t" style="top:211.07px;font-size:13.5px;color:#333;letter-spacing:0.028px;left:434px;">Date</div>
<svg class="a" style="left:501.5px;top:214.5px" width="11" height="7" viewBox="0 0 11 7"><path d="M0.5 6.5L5.5 1L10.5 6.5Z" fill="#666"/></svg>
<div class="t" style="top:211.07px;font-size:13.5px;color:#333;letter-spacing:-0.933px;left:534.3px;">Time</div>
<div class="t" style="top:211.07px;font-size:13.5px;color:#333;letter-spacing:-0.427px;left:577.7px;">People</div>
<div class="t" style="top:211.07px;font-size:13.5px;color:#333;letter-spacing:-0.344px;left:695.5px;">Record</div>
<div class="a" style="left:400px;top:234px;width:375px;height:34px;background:#d9f0fd;"></div>
<div class="a" style="left:434px;top:235px;width:340px;height:33px;background:#0080c5;"></div>
<svg class="a" style="left:407.9px;top:242.2px" width="17.6" height="17.6" viewBox="0 0 17.6 17.6"><circle cx="8.8" cy="8.8" r="7.1499999999999995" fill="none" stroke="#3a4040" stroke-width="1.3"/><path d="M5.4 5.4L11.4 11.4" stroke="#3a4040" stroke-width="2.0"/><path d="M12.100000000000001 6.6000000000000005V12.100000000000001H6.6000000000000005" fill="none" stroke="#3a4040" stroke-width="2.0"/></svg>
<div class="t" style="top:236.27px;font-size:13.5px;color:#00e6ff;letter-spacing:0.270px;left:434px;">25.09.2024</div>
<div class="t" style="top:236.27px;font-size:13.5px;color:#00e6ff;letter-spacing:-0.056px;left:623.3px;">Wednesday</div>
<div class="a" style="left:400px;top:268px;width:375px;height:20px;background:#dffbe3;"></div>
<div class="t" style="top:269.97px;font-size:13.5px;color:#1b1b28;letter-spacing:-0.121px;left:524.7px;-webkit-text-stroke:0.22px currentColor;">10:00</div>
<div class="a" style="left:400px;top:288px;width:375px;height:20px;background:#d9f0fd;"></div>
<div class="t" style="top:289.97px;font-size:13.5px;color:#1b1b28;letter-spacing:0.130px;left:524.7px;-webkit-text-stroke:0.22px currentColor;">11:00</div>
<div class="a" style="left:400px;top:308px;width:375px;height:20px;background:#dffbe3;"></div>
<div class="a" style="left:524px;top:308px;width:250px;height:20px;background:#ffffc0;"></div>
<div class="t" style="top:309.97px;font-size:13.5px;color:#d21a1a;letter-spacing:-0.121px;left:524.7px;-webkit-text-stroke:0.22px currentColor;">12:00</div>
<div class="t" style="top:309.97px;font-size:13.5px;color:#d21a1a;letter-spacing:0.617px;left:573px;-webkit-text-stroke:0.22px currentColor;">0/1</div>
<div class="t" style="top:309.97px;font-size:13.5px;color:#d21a1a;letter-spacing:-0.170px;left:623.3px;">Children trampoline</div>
<svg class="a" style="left:473px;top:308.5px" width="22" height="19" viewBox="0 0 22 19"><path d="M1.6 6V17.5M19.9 6V17.5M10.8 9.5V15.5" stroke="#657070" stroke-width="1.6"/><ellipse cx="10.8" cy="5.3" rx="9.4" ry="4.2" fill="#f2b73a" stroke="#5a6868" stroke-width="2.2"/></svg>
<svg class="a" style="left:505.3px;top:312px" width="11" height="10" viewBox="0 0 11 10"><path d="M1.2 4.6L4.5 8.6L10.2 0.8" fill="none" stroke="#111" stroke-width="2.6" stroke-linejoin="miter"/></svg>
<div class="a" style="left:400px;top:328px;width:375px;height:20px;background:#d9f0fd;"></div>
<div class="t" style="top:329.97px;font-size:13.5px;color:#1b1b28;letter-spacing:-0.121px;left:524.7px;-webkit-text-stroke:0.22px currentColor;">12:00</div>
<div class="a" style="left:400px;top:348px;width:375px;height:20px;background:#dffbe3;"></div>
<div class="t" style="top:349.97px;font-size:13.5px;color:#1b1b28;letter-spacing:-0.121px;left:524.7px;-webkit-text-stroke:0.22px currentColor;">13:00</div>
<div class="a" style="left:400px;top:368px;width:375px;height:20px;background:#d9f0fd;"></div>
<div class="t" style="top:369.97px;font-size:13.5px;color:#1b1b28;letter-spacing:-0.121px;left:524.7px;-webkit-text-stroke:0.22px currentColor;">14:00</div>
<div class="a" style="left:400px;top:388px;width:375px;height:20px;background:#dffbe3;"></div>
<div class="t" style="top:389.97px;font-size:13.5px;color:#1b1b28;letter-spacing:-0.121px;left:524.7px;-webkit-text-stroke:0.22px currentColor;">15:00</div>
<div class="a" style="left:400px;top:408px;width:375px;height:20px;background:#d9f0fd;"></div>
<div class="t" style="top:409.97px;font-size:13.5px;color:#1b1b28;letter-spacing:-0.121px;left:524.7px;-webkit-text-stroke:0.22px currentColor;">16:00</div>
<div class="a" style="left:400px;top:428px;width:375px;height:20px;background:#dffbe3;"></div>
<div class="t" style="top:429.97px;font-size:13.5px;color:#1b1b28;letter-spacing:-0.121px;left:524.7px;-webkit-text-stroke:0.22px currentColor;">17:00</div>
<div class="a" style="left:400px;top:448px;width:375px;height:20px;background:#d9f0fd;"></div>
<div class="t" style="top:449.97px;font-size:13.5px;color:#1b1b28;letter-spacing:-0.121px;left:524.7px;-webkit-text-stroke:0.22px currentColor;">18:00</div>
<div class="a" style="left:400px;top:468px;width:375px;height:20px;background:#dffbe3;"></div>
<div class="t" style="top:469.97px;font-size:13.5px;color:#1b1b28;letter-spacing:-0.121px;left:524.7px;-webkit-text-stroke:0.22px currentColor;">19:00</div>
<div class="a" style="left:400px;top:488px;width:375px;height:20px;background:#d9f0fd;"></div>
<div class="t" style="top:489.97px;font-size:13.5px;color:#1b1b28;letter-spacing:-0.121px;left:524.7px;-webkit-text-stroke:0.22px currentColor;">20:00</div>
<div class="a" style="left:400px;top:508px;width:375px;height:34px;background:#dffbe3;"></div>
<div class="a" style="left:434px;top:509px;width:340px;height:33px;background:#0080c5;"></div>
<svg class="a" style="left:407.9px;top:516.2px" width="17.6" height="17.6" viewBox="0 0 17.6 17.6"><circle cx="8.8" cy="8.8" r="7.1499999999999995" fill="none" stroke="#3a4040" stroke-width="1.3"/><path d="M5.4 5.4L11.4 11.4" stroke="#3a4040" stroke-width="2.0"/><path d="M12.100000000000001 6.6000000000000005V12.100000000000001H6.6000000000000005" fill="none" stroke="#3a4040" stroke-width="2.0"/></svg>
<div class="t" style="top:510.27px;font-size:13.5px;color:#f2f2f2;letter-spacing:0.270px;left:434px;">26.09.2024</div>
<div class="t" style="top:510.27px;font-size:13.5px;color:#f2f2f2;letter-spacing:0.104px;left:623.3px;">Thursday</div>
<div class="a" style="left:400px;top:542px;width:375px;height:20px;background:#d9f0fd;"></div>
<div class="t" style="top:543.97px;font-size:13.5px;color:#1b1b28;letter-spacing:-0.121px;left:524.7px;-webkit-text-stroke:0.22px currentColor;">10:00</div>
<div class="a" style="left:400px;top:562px;width:375px;height:20px;background:#dffbe3;"></div>
<div class="t" style="top:563.97px;font-size:13.5px;color:#1b1b28;letter-spacing:0.130px;left:524.7px;-webkit-text-stroke:0.22px currentColor;">11:00</div>
<div class="a" style="left:400px;top:582px;width:375px;height:20px;background:#d9f0fd;"></div>
<div class="t" style="top:583.97px;font-size:13.5px;color:#1b1b28;letter-spacing:-0.121px;left:524.7px;-webkit-text-stroke:0.22px currentColor;">12:00</div>
<div class="a" style="left:400px;top:602px;width:375px;height:20px;background:#dffbe3;"></div>
<div class="t" style="top:603.97px;font-size:13.5px;color:#1b1b28;letter-spacing:-0.121px;left:524.7px;-webkit-text-stroke:0.22px currentColor;">13:00</div>
<div class="a" style="left:400px;top:622px;width:375px;height:20px;background:#d9f0fd;"></div>
<div class="t" style="top:623.97px;font-size:13.5px;color:#1b1b28;letter-spacing:-0.121px;left:524.7px;-webkit-text-stroke:0.22px currentColor;">14:00</div>
<div class="a" style="left:400px;top:642px;width:375px;height:20px;background:#dffbe3;"></div>
<div class="t" style="top:643.97px;font-size:13.5px;color:#1b1b28;letter-spacing:-0.121px;left:524.7px;-webkit-text-stroke:0.22px currentColor;">15:00</div>
<div class="a" style="left:400px;top:662px;width:375px;height:20px;background:#d9f0fd;"></div>
<div class="t" style="top:663.97px;font-size:13.5px;color:#1b1b28;letter-spacing:-0.121px;left:524.7px;-webkit-text-stroke:0.22px currentColor;">16:00</div>
<div class="a" style="left:400px;top:682px;width:375px;height:20px;background:#dffbe3;"></div>
<div class="t" style="top:683.97px;font-size:13.5px;color:#1b1b28;letter-spacing:-0.121px;left:524.7px;-webkit-text-stroke:0.22px currentColor;">17:00</div>
<div class="a" style="left:400px;top:702px;width:375px;height:20px;background:#d9f0fd;"></div>
<div class="t" style="top:703.97px;font-size:13.5px;color:#1b1b28;letter-spacing:-0.121px;left:524.7px;-webkit-text-stroke:0.22px currentColor;">18:00</div>
<div class="a" style="left:400px;top:722px;width:375px;height:20px;background:#dffbe3;"></div>
<div class="t" style="top:723.97px;font-size:13.5px;color:#1b1b28;letter-spacing:-0.121px;left:524.7px;-webkit-text-stroke:0.22px currentColor;">19:00</div>
<div class="a" style="left:400px;top:742px;width:375px;height:20px;background:#d9f0fd;"></div>
<div class="t" style="top:743.97px;font-size:13.5px;color:#1b1b28;letter-spacing:-0.121px;left:524.7px;-webkit-text-stroke:0.22px currentColor;">20:00</div>
<div class="a" style="left:400px;top:758px;width:375px;height:21px;background:#fff;"></div>
<div class="a" style="left:401px;top:758px;width:373px;height:1px;background:#bdbdbd;"></div>
<div class="a" style="left:774px;top:167px;width:1px;height:592px;background:#c8c8c8;"></div>
<div class="a" style="left:775px;top:167px;width:20px;height:612px;background:#fff;"></div>
<div class="a" style="left:780px;top:188px;width:10px;height:545px;background:#b9b9b9;"></div>
<svg class="a" style="left:781px;top:174px" width="9" height="6" viewBox="0 0 9 6"><path d="M0.5 5L4.5 0.8L8.5 5Z" fill="#777"/></svg>
<svg class="a" style="left:781px;top:743px" width="9" height="6" viewBox="0 0 9 6"><path d="M0.5 1L4.5 5.2L8.5 1Z" fill="#777"/></svg>
<div class="a" style="left:421px;top:764px;width:301px;height:10px;background:#b9b9b9;"></div>
<svg class="a" style="left:407px;top:765px" width="6" height="9" viewBox="0 0 6 9"><path d="M5 0.5L0.8 4.5L5 8.5Z" fill="#888"/></svg>
<svg class="a" style="left:761px;top:765px" width="6" height="9" viewBox="0 0 6 9"><path d="M1 0.5L5.2 4.5L1 8.5Z" fill="#888"/></svg>
<div class="a" style="left:399px;top:779px;width:397px;height:1px;background:#c4c4c4;"></div>
<div class="a" style="left:795px;top:165px;width:1px;height:615px;background:#c4c4c4;"></div>
<div class="a" style="left:804px;top:165px;width:397px;height:615px;background:#fff;border:2px solid #c4c4c4;box-sizing:border-box;border-right-width:1px;border-bottom-width:1px;"></div>
<div class="a" style="left:806px;top:167px;width:373px;height:66px;background:#f5f5f5;"></div>
<div class="a" style="left:806px;top:199px;width:373px;height:1px;background:#cfcfcf;"></div>
<div class="a" style="left:806px;top:233px;width:373px;height:1px;background:#cfcfcf;"></div>
<div class="t" style="top:177.27px;font-size:13.5px;color:#333;letter-spacing:-0.027px;left:945.8px;">2. Roller skating area</div>
<div class="a" style="left:928px;top:200px;width:1px;height:33px;background:#d4d4d4;"></div>
<div class="a" style="left:978px;top:200px;width:1px;height:33px;background:#d4d4d4;"></div>
<div class="a" style="left:1028px;top:200px;width:1px;height:33px;background:#d4d4d4;"></div>
<div class="t" style="top:211.07px;font-size:13.5px;color:#333;letter-spacing:0.028px;left:839px;">Date</div>
<svg class="a" style="left:906.5px;top:214.5px" width="11" height="7" viewBox="0 0 11 7"><path d="M0.5 6.5L5.5 1L10.5 6.5Z" fill="#666"/></svg>
<div class="t" style="top:211.07px;font-size:13.5px;color:#333;letter-spacing:-0.933px;left:939.3px;">Time</div>
<div class="t" style="top:211.07px;font-size:13.5px;color:#333;letter-spacing:-0.427px;left:982.7px;">People</div>
<div class="t" style="top:211.07px;font-size:13.5px;color:#333;letter-spacing:-0.344px;left:1100.5px;">Record</div>
<div class="a" style="left:805px;top:234px;width:375px;height:34px;background:#d9f0fd;"></div>
<div class="a" style="left:839px;top:235px;width:340px;height:33px;background:#0080c5;"></div>
<svg class="a" style="left:812.9000000000001px;top:242.2px" width="17.6" height="17.6" viewBox="0 0 17.6 17.6"><circle cx="8.8" cy="8.8" r="7.1499999999999995" fill="none" stroke="#3a4040" stroke-width="1.3"/><path d="M5.4 5.4L11.4 11.4" stroke="#3a4040" stroke-width="2.0"/><path d="M12.100000000000001 6.6000000000000005V12.100000000000001H6.6000000000000005" fill="none" stroke="#3a4040" stroke-width="2.0"/></svg>
<div class="t" style="top:236.27px;font-size:13.5px;color:#00e6ff;letter-spacing:0.270px;left:839px;">25.09.2024</div>
<div class="t" style="top:236.27px;font-size:13.5px;color:#00e6ff;letter-spacing:-0.056px;left:1028.3px;">Wednesday</div>
<div class="a" style="left:805px;top:268px;width:375px;height:20px;background:#dffbe3;"></div>
<div class="t" style="top:269.97px;font-size:13.5px;color:#1b1b28;letter-spacing:-0.121px;left:929.7px;-webkit-text-stroke:0.22px currentColor;">10:00</div>
<div class="a" style="left:805px;top:288px;width:375px;height:20px;background:#d9f0fd;"></div>
<div class="t" style="top:289.97px;font-size:13.5px;color:#1b1b28;letter-spacing:0.130px;left:929.7px;-webkit-text-stroke:0.22px currentColor;">11:00</div>
<div class="a" style="left:805px;top:308px;width:375px;height:20px;background:#dffbe3;"></div>
<div class="t" style="top:309.97px;font-size:13.5px;color:#1b1b28;letter-spacing:-0.121px;left:929.7px;-webkit-text-stroke:0.22px currentColor;">12:00</div>
<div class="a" style="left:805px;top:328px;width:375px;height:20px;background:#d9f0fd;"></div>
<div class="t" style="top:329.97px;font-size:13.5px;color:#1b1b28;letter-spacing:-0.121px;left:929.7px;-webkit-text-stroke:0.22px currentColor;">13:00</div>
<div class="a" style="left:805px;top:348px;width:375px;height:20px;background:#dffbe3;"></div>
<div class="t" style="top:349.97px;font-size:13.5px;color:#1b1b28;letter-spacing:-0.121px;left:929.7px;-webkit-text-stroke:0.22px currentColor;">14:00</div>
<div class="a" style="left:805px;top:368px;width:375px;height:20px;background:#d9f0fd;"></div>
<div class="a" style="left:929px;top:368px;width:250px;height:20px;background:#ffffc0;"></div>
<div class="t" style="top:369.97px;font-size:13.5px;color:#d21a1a;letter-spacing:-0.121px;left:929.7px;-webkit-text-stroke:0.22px currentColor;">15:00</div>
<div class="t" style="top:369.97px;font-size:13.5px;color:#d21a1a;letter-spacing:0.617px;left:978px;-webkit-text-stroke:0.22px currentColor;">0/1</div>
<div class="t" style="top:369.97px;font-size:13.5px;color:#d21a1a;letter-spacing:0.498px;left:1028.3px;">Rollers</div>
<svg class="a" style="left:879px;top:368px" width="20" height="19" viewBox="0 0 20 19"><path d="M1.5 2.5Q1.5 1 3 1H9Q10 1 10.2 2L10.8 7.5L16 10.5Q19 12 19 14.2V15.5H1.5Z" fill="#7a7e98"/><path d="M3 4.5H8M3 7H8.5" stroke="#a8acc0" stroke-width="1"/><path d="M11 11L14 12.5" stroke="#d07070" stroke-width="1"/><rect x="1.5" y="15" width="17.5" height="1.5" fill="#9a6a78"/><circle cx="3.6" cy="17.3" r="1.7" fill="#d06070"/><circle cx="8" cy="17.3" r="1.7" fill="#d06070"/><circle cx="12.4" cy="17.3" r="1.7" fill="#d06070"/><circle cx="16.8" cy="17.3" r="1.7" fill="#d06070"/><rect x="12" y="0" width="2" height="2" fill="#c0a0b0"/><rect x="15.5" y="3" width="2" height="2" fill="#c0a0b0"/><rect x="16" y="0" width="1.4" height="1.4" fill="#c8b0c0"/></svg>
<svg class="a" style="left:910px;top:372px" width="11" height="10" viewBox="0 0 11 10"><path d="M1.2 4.6L4.5 8.6L10.2 0.8" fill="none" stroke="#111" stroke-width="2.6" stroke-linejoin="miter"/></svg>
<div class="a" style="left:805px;top:388px;width:375px;height:20px;background:#dffbe3;"></div>
<div class="t" style="top:389.97px;font-size:13.5px;color:#1b1b28;letter-spacing:-0.121px;left:929.7px;-webkit-text-stroke:0.22px currentColor;">15:00</div>
<div class="a" style="left:805px;top:408px;width:375px;height:20px;background:#d9f0fd;"></div>
<div class="t" style="top:409.97px;font-size:13.5px;color:#1b1b28;letter-spacing:-0.121px;left:929.7px;-webkit-text-stroke:0.22px currentColor;">16:00</div>
<div class="a" style="left:805px;top:428px;width:375px;height:20px;background:#dffbe3;"></div>
<div class="t" style="top:429.97px;font-size:13.5px;color:#1b1b28;letter-spacing:-0.121px;left:929.7px;-webkit-text-stroke:0.22px currentColor;">17:00</div>
<div class="a" style="left:805px;top:448px;width:375px;height:20px;background:#d9f0fd;"></div>
<div class="t" style="top:449.97px;font-size:13.5px;color:#1b1b28;letter-spacing:-0.121px;left:929.7px;-webkit-text-stroke:0.22px currentColor;">18:00</div>
<div class="a" style="left:805px;top:468px;width:375px;height:20px;background:#dffbe3;"></div>
<div class="t" style="top:469.97px;font-size:13.5px;color:#1b1b28;letter-spacing:-0.121px;left:929.7px;-webkit-text-stroke:0.22px currentColor;">19:00</div>
<div class="a" style="left:805px;top:488px;width:375px;height:20px;background:#d9f0fd;"></div>
<div class="t" style="top:489.97px;font-size:13.5px;color:#1b1b28;letter-spacing:-0.121px;left:929.7px;-webkit-text-stroke:0.22px currentColor;">20:00</div>
<div class="a" style="left:805px;top:508px;width:375px;height:34px;background:#dffbe3;"></div>
<div class="a" style="left:839px;top:509px;width:340px;height:33px;background:#0080c5;"></div>
<svg class="a" style="left:812.9000000000001px;top:516.2px" width="17.6" height="17.6" viewBox="0 0 17.6 17.6"><circle cx="8.8" cy="8.8" r="7.1499999999999995" fill="none" stroke="#3a4040" stroke-width="1.3"/><path d="M5.4 5.4L11.4 11.4" stroke="#3a4040" stroke-width="2.0"/><path d="M12.100000000000001 6.6000000000000005V12.100000000000001H6.6000000000000005" fill="none" stroke="#3a4040" stroke-width="2.0"/></svg>
<div class="t" style="top:510.27px;font-size:13.5px;color:#f2f2f2;letter-spacing:0.270px;left:839px;">26.09.2024</div>
<div class="t" style="top:510.27px;font-size:13.5px;color:#f2f2f2;letter-spacing:0.104px;left:1028.3px;">Thursday</div>
<div class="a" style="left:805px;top:542px;width:375px;height:20px;background:#d9f0fd;"></div>
<div class="t" style="top:543.97px;font-size:13.5px;color:#1b1b28;letter-spacing:-0.121px;left:929.7px;-webkit-text-stroke:0.22px currentColor;">10:00</div>
<div class="a" style="left:805px;top:562px;width:375px;height:20px;background:#dffbe3;"></div>
<div class="t" style="top:563.97px;font-size:13.5px;color:#1b1b28;letter-spacing:0.130px;left:929.7px;-webkit-text-stroke:0.22px currentColor;">11:00</div>
<div class="a" style="left:805px;top:582px;width:375px;height:20px;background:#d9f0fd;"></div>
<div class="t" style="top:583.97px;font-size:13.5px;color:#1b1b28;letter-spacing:-0.121px;left:929.7px;-webkit-text-stroke:0.22px currentColor;">12:00</div>
<div class="a" style="left:805px;top:602px;width:375px;height:20px;background:#dffbe3;"></div>
<div class="t" style="top:603.97px;font-size:13.5px;color:#1b1b28;letter-spacing:-0.121px;left:929.7px;-webkit-text-stroke:0.22px currentColor;">13:00</div>
<div class="a" style="left:805px;top:622px;width:375px;height:20px;background:#d9f0fd;"></div>
<div class="t" style="top:623.97px;font-size:13.5px;color:#1b1b28;letter-spacing:-0.121px;left:929.7px;-webkit-text-stroke:0.22px currentColor;">14:00</div>
<div class="a" style="left:805px;top:642px;width:375px;height:20px;background:#dffbe3;"></div>
<div class="t" style="top:643.97px;font-size:13.5px;color:#1b1b28;letter-spacing:-0.121px;left:929.7px;-webkit-text-stroke:0.22px currentColor;">15:00</div>
<div class="a" style="left:805px;top:662px;width:375px;height:20px;background:#d9f0fd;"></div>
<div class="t" style="top:663.97px;font-size:13.5px;color:#1b1b28;letter-spacing:-0.121px;left:929.7px;-webkit-text-stroke:0.22px currentColor;">16:00</div>
<div class="a" style="left:805px;top:682px;width:375px;height:20px;background:#dffbe3;"></div>
<div class="t" style="top:683.97px;font-size:13.5px;color:#1b1b28;letter-spacing:-0.121px;left:929.7px;-webkit-text-stroke:0.22px currentColor;">17:00</div>
<div class="a" style="left:805px;top:702px;width:375px;height:20px;background:#d9f0fd;"></div>
<div class="t" style="top:703.97px;font-size:13.5px;color:#1b1b28;letter-spacing:-0.121px;left:929.7px;-webkit-text-stroke:0.22px currentColor;">18:00</div>
<div class="a" style="left:805px;top:722px;width:375px;height:20px;background:#dffbe3;"></div>
<div class="t" style="top:723.97px;font-size:13.5px;color:#1b1b28;letter-spacing:-0.121px;left:929.7px;-webkit-text-stroke:0.22px currentColor;">19:00</div>
<div class="a" style="left:805px;top:742px;width:375px;height:20px;background:#d9f0fd;"></div>
<div class="t" style="top:743.97px;font-size:13.5px;color:#1b1b28;letter-spacing:-0.121px;left:929.7px;-webkit-text-stroke:0.22px currentColor;">20:00</div>
<div class="a" style="left:805px;top:758px;width:375px;height:21px;background:#fff;"></div>
<div class="a" style="left:806px;top:758px;width:373px;height:1px;background:#bdbdbd;"></div>
<div class="a" style="left:1179px;top:167px;width:1px;height:592px;background:#c8c8c8;"></div>
<div class="a" style="left:1180px;top:167px;width:20px;height:612px;background:#fff;"></div>
<div class="a" style="left:1185px;top:188px;width:10px;height:545px;background:#b9b9b9;"></div>
<svg class="a" style="left:1186px;top:174px" width="9" height="6" viewBox="0 0 9 6"><path d="M0.5 5L4.5 0.8L8.5 5Z" fill="#777"/></svg>
<svg class="a" style="left:1186px;top:743px" width="9" height="6" viewBox="0 0 9 6"><path d="M0.5 1L4.5 5.2L8.5 1Z" fill="#777"/></svg>
<div class="a" style="left:826px;top:764px;width:301px;height:10px;background:#b9b9b9;"></div>
<svg class="a" style="left:812px;top:765px" width="6" height="9" viewBox="0 0 6 9"><path d="M5 0.5L0.8 4.5L5 8.5Z" fill="#888"/></svg>
<svg class="a" style="left:1166px;top:765px" width="6" height="9" viewBox="0 0 6 9"><path d="M1 0.5L5.2 4.5L1 8.5Z" fill="#888"/></svg>
<div class="a" style="left:804px;top:779px;width:397px;height:1px;background:#c4c4c4;"></div>
<div class="a" style="left:1200px;top:165px;width:1px;height:615px;background:#c4c4c4;"></div>
<div class="a" style="left:22px;top:811px;width:1202px;height:1px;background:#cfcfcf;"></div>
<div class="a" style="left:206px;top:814px;width:1018px;height:1px;background:#c8c8c8;"></div>
<div class="a" style="left:206px;top:812px;width:1018px;height:2px;background:#fff;"></div>
<div class="a" style="left:22px;top:811px;width:184px;height:55px;background:#fff;border:1px solid #c8c8c8;box-sizing:border-box;border-bottom:none;"></div>
<div class="a" style="left:22px;top:864px;width:184px;height:2.5px;background:#1a9be6;"></div>
<svg class="a" style="left:39px;top:826px" width="32" height="28" viewBox="0 0 32 28"><defs><linearGradient id="wg" x1="0" y1="0" x2="0" y2="1"><stop offset="0" stop-color="#f4f6fc"/><stop offset="1" stop-color="#dde3f2"/></linearGradient></defs><rect x="1.5" y="1" width="29" height="25" rx="2" fill="url(#wg)" stroke="#7c8cc0" stroke-width="1.2"/><path d="M1.5 3Q1.5 1 3.5 1H28.5Q30.5 1 30.5 3V8H1.5Z" fill="#6a9edc"/><circle cx="26" cy="4.3" r="1.4" fill="#e83a30"/></svg>
<div class="t" style="top:832.57px;font-size:13.5px;color:#1c98e6;letter-spacing:0.024px;left:81.9px;">Registration</div>
<svg class="a" style="left:173px;top:834px" width="12" height="10" viewBox="0 0 12 10"><path d="M1.5 0.8L10.5 9.2M10.5 0.8L1.5 9.2" stroke="#1c98e6" stroke-width="2"/></svg>
<svg class="a" style="left:28.5px;top:869px" width="21" height="21" viewBox="0 0 21 21"><circle cx="10.3" cy="10" r="9.8" fill="#3f7ec2"/><rect x="8.8" y="8" width="3" height="7.5" fill="#fff"/><circle cx="10.3" cy="5" r="1.6" fill="#fff"/></svg>
<div class="t" style="top:873.65px;font-size:14px;color:#3a3a3a;letter-spacing:-0.119px;left:70.4px;">7.2.9060.10 Standard</div>
<div class="a" style="left:229px;top:870px;width:1px;height:20px;background:#c0c0c0;"></div>
<div class="a" style="left:399.5px;top:870px;width:1px;height:20px;background:#c0c0c0;"></div>
<div class="a" style="left:577.5px;top:870px;width:1px;height:20px;background:#c0c0c0;"></div>
<div class="a" style="left:727px;top:870px;width:1px;height:20px;background:#c0c0c0;"></div>
<div class="a" style="left:875.5px;top:870px;width:1px;height:20px;background:#c0c0c0;"></div>
<div class="a" style="left:1193px;top:870px;width:1px;height:20px;background:#c0c0c0;"></div>
<svg class="a" style="left:243px;top:869px" width="18" height="20" viewBox="0 0 18 20"><defs><linearGradient id="dbg" x1="0" y1="0" x2="1" y2="0"><stop offset="0" stop-color="#e89838"/><stop offset="0.5" stop-color="#fcd890"/><stop offset="1" stop-color="#e08a28"/></linearGradient></defs><path d="M1.5 3.5V16.5Q1.5 19 8.5 19Q15.5 19 15.5 16.5V3.5Z" fill="url(#dbg)" stroke="#c07020" stroke-width="0.8"/><ellipse cx="8.5" cy="3.5" rx="7" ry="2.5" fill="#fce0a8" stroke="#c07020" stroke-width="0.8"/><path d="M1.5 8Q8.5 10.5 15.5 8M1.5 12.5Q8.5 15 15.5 12.5" fill="none" stroke="#c07020" stroke-width="0.8"/></svg>
<div class="t" style="top:873.65px;font-size:14px;color:#3a3a3a;letter-spacing:-0.015px;left:281px;">localhost (utf8)</div>
<svg class="a" style="left:412px;top:869px" width="19" height="19" viewBox="0 0 18 18"><defs><linearGradient id="pbg" x1="0" y1="0" x2="0" y2="1"><stop offset="0" stop-color="#b8e060"/><stop offset="1" stop-color="#80b830"/></linearGradient></defs><path d="M0.8 16Q0.8 11.5 9 11.5Q17.2 11.5 17.2 16Q17.2 17.6 15.5 17.6H2.5Q0.8 17.6 0.8 16Z" fill="url(#pbg)" stroke="#5a9028" stroke-width="0.8"/><path d="M7 10.5H11V13H7Z" fill="#d89a70"/><path d="M4.3 6Q4 0.6 9 0.6Q14 0.6 13.7 6Q13.5 9 12 10Q11 12.5 9 12.5Q7 12.5 6 10Q4.5 9 4.3 6Z" fill="#c0642c"/><ellipse cx="8.8" cy="7.6" rx="2.9" ry="4" fill="#f8d0a8"/></svg>
<div class="t" style="top:873.65px;font-size:14px;color:#3a3a3a;letter-spacing:-0.616px;left:451.7px;">NIKOLAY (MAIN)</div>
<svg class="a" style="left:590px;top:869px" width="20" height="20" viewBox="0 0 20 20"><rect x="1.5" y="1.3" width="17" height="17.3" fill="#f4f6fb" stroke="#8894c4" stroke-width="1"/><rect x="1" y="0.8" width="18" height="4.2" fill="#e0604c"/><text x="10" y="16.6" font-family="Liberation Sans" font-size="11.5" font-weight="700" fill="#34405c" text-anchor="middle" textLength="12.5" lengthAdjust="spacingAndGlyphs">31</text></svg>
<div class="t" style="top:873.65px;font-size:14px;color:#3a3a3a;letter-spacing:0.059px;left:630.4px;">25.09.2024</div>
<div class="t" style="top:873.65px;font-size:14px;color:#3a3a3a;letter-spacing:0.105px;left:761.7px;">00:00:00:002</div>
<div class="t" style="top:873.65px;font-size:14px;color:#3a3a3a;letter-spacing:-0.309px;left:889px;">17:00</div>
<svg class="a" style="left:1208px;top:874px" width="16" height="16" viewBox="0 0 16 16"><rect x="12" y="1" width="1.6" height="1.6" fill="#777"/><rect x="12" y="5" width="1.6" height="1.6" fill="#777"/><rect x="8" y="5" width="1.6" height="1.6" fill="#777"/><rect x="12" y="9" width="1.6" height="1.6" fill="#777"/><rect x="8" y="9" width="1.6" height="1.6" fill="#777"/><rect x="4" y="9" width="1.6" height="1.6" fill="#777"/><rect x="12" y="13" width="1.6" height="1.6" fill="#777"/><rect x="8" y="13" width="1.6" height="1.6" fill="#777"/><rect x="4" y="13" width="1.6" height="1.6" fill="#777"/><rect x="0" y="13" width="1.6" height="1.6" fill="#777"/></svg>
<div class="a" style="left:0px;top:0px;width:1245px;height:913px;border:1px solid #9a9a9a;box-sizing:border-box;border-bottom-width:2px;"></div>
</body></html>
